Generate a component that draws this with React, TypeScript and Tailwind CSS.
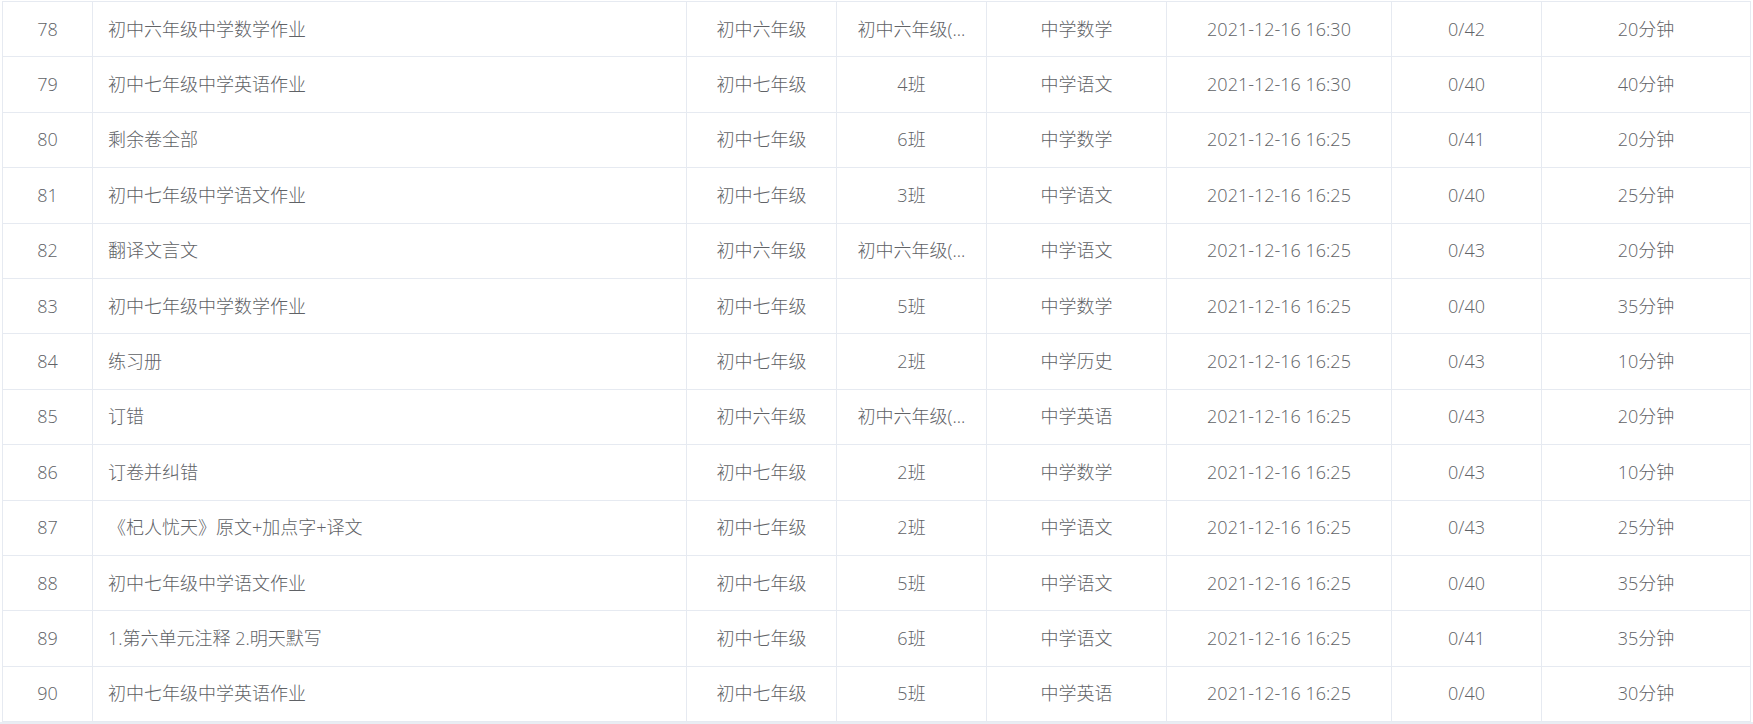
import React from 'react';

type Row = {
  id: number;
  title: string;
  grade: string;
  klass: string;
  subject: string;
  time: string;
  done: string;
  duration: string;
};

const rows: Row[] = [
  { id: 78, title: '初中六年级中学数学作业', grade: '初中六年级', klass: '初中六年级(...', subject: '中学数学', time: '2021-12-16 16:30', done: '0/42', duration: '20分钟' },
  { id: 79, title: '初中七年级中学英语作业', grade: '初中七年级', klass: '4班', subject: '中学语文', time: '2021-12-16 16:30', done: '0/40', duration: '40分钟' },
  { id: 80, title: '剩余卷全部', grade: '初中七年级', klass: '6班', subject: '中学数学', time: '2021-12-16 16:25', done: '0/41', duration: '20分钟' },
  { id: 81, title: '初中七年级中学语文作业', grade: '初中七年级', klass: '3班', subject: '中学语文', time: '2021-12-16 16:25', done: '0/40', duration: '25分钟' },
  { id: 82, title: '翻译文言文', grade: '初中六年级', klass: '初中六年级(...', subject: '中学语文', time: '2021-12-16 16:25', done: '0/43', duration: '20分钟' },
  { id: 83, title: '初中七年级中学数学作业', grade: '初中七年级', klass: '5班', subject: '中学数学', time: '2021-12-16 16:25', done: '0/40', duration: '35分钟' },
  { id: 84, title: '练习册', grade: '初中七年级', klass: '2班', subject: '中学历史', time: '2021-12-16 16:25', done: '0/43', duration: '10分钟' },
  { id: 85, title: '订错', grade: '初中六年级', klass: '初中六年级(...', subject: '中学英语', time: '2021-12-16 16:25', done: '0/43', duration: '20分钟' },
  { id: 86, title: '订卷并纠错', grade: '初中七年级', klass: '2班', subject: '中学数学', time: '2021-12-16 16:25', done: '0/43', duration: '10分钟' },
  { id: 87, title: '《杞人忧天》原文+加点字+译文', grade: '初中七年级', klass: '2班', subject: '中学语文', time: '2021-12-16 16:25', done: '0/43', duration: '25分钟' },
  { id: 88, title: '初中七年级中学语文作业', grade: '初中七年级', klass: '5班', subject: '中学语文', time: '2021-12-16 16:25', done: '0/40', duration: '35分钟' },
  { id: 89, title: '1.第六单元注释 2.明天默写', grade: '初中七年级', klass: '6班', subject: '中学语文', time: '2021-12-16 16:25', done: '0/41', duration: '35分钟' },
  { id: 90, title: '初中七年级中学英语作业', grade: '初中七年级', klass: '5班', subject: '中学英语', time: '2021-12-16 16:25', done: '0/40', duration: '30分钟' },
];

const cell = 'flex items-center justify-center border-r border-[#e6eaf1] px-[15px] overflow-hidden whitespace-nowrap';

const App = () => {
  return (
    <div className="w-full h-[724px] overflow-hidden bg-white font-['Open_Sans','Noto_Sans_CJK_SC',sans-serif] font-light text-[18px] text-[#606266]">
      <div className="pl-[2px] pt-px">
        <div className="w-[1749px] border-l border-t border-[#e6eaf1]">
          {rows.map((row) => (
            <div key={row.id} className="flex h-[55.4px] border-b border-[#e6eaf1]">
              <div className={`${cell} w-[90px]`}>{row.id}</div>
              <div className={`${cell} w-[594px] !justify-start`}>{row.title}</div>
              <div className={`${cell} w-[150px]`}>{row.grade}</div>
              <div className={`${cell} w-[150px]`}>{row.klass}</div>
              <div className={`${cell} w-[180px]`}>{row.subject}</div>
              <div className={`${cell} w-[225px]`}>{row.time}</div>
              <div className={`${cell} w-[150px]`}>{row.done}</div>
              <div className={`${cell} w-[209px]`}>{row.duration}</div>
            </div>
          ))}
        </div>
      </div>
      <div className="h-4 w-full bg-[#e9edf3]" />
    </div>
  );
};

export default App;
